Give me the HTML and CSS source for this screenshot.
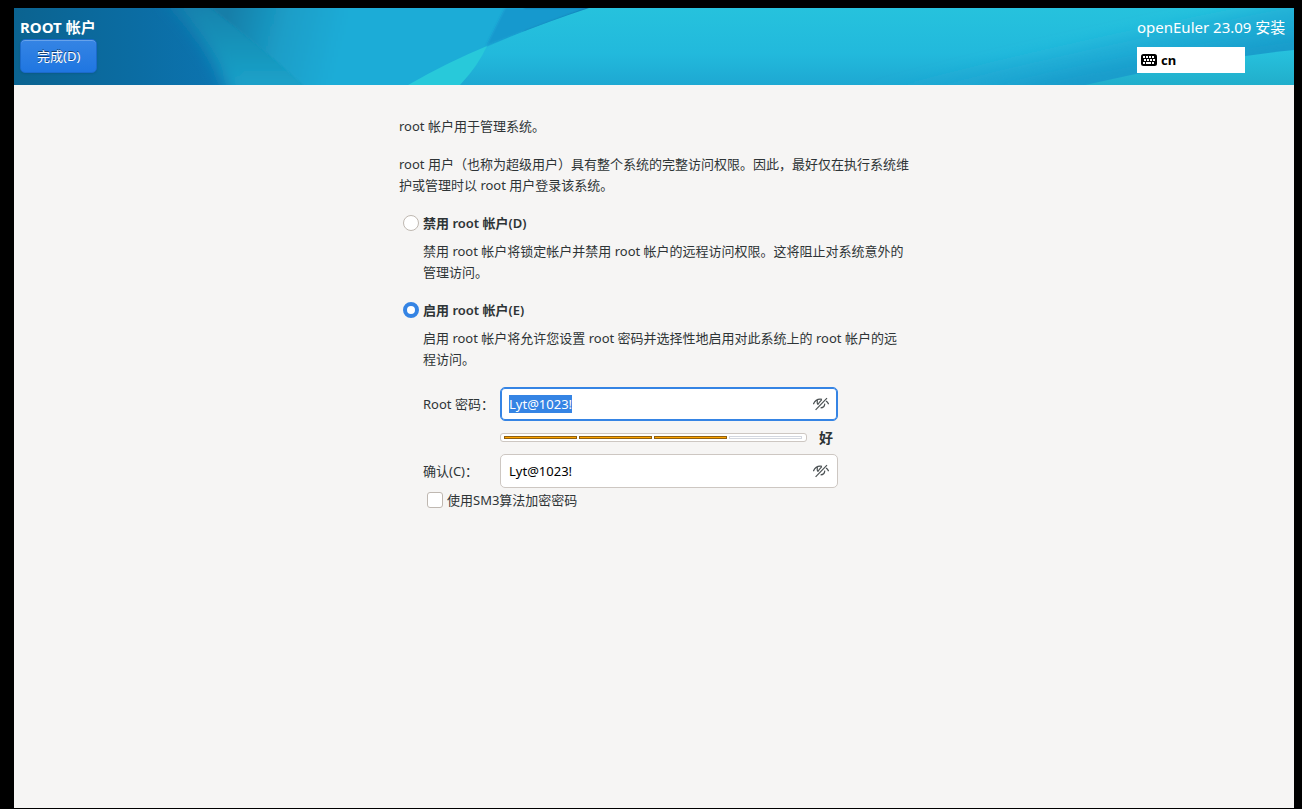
FILE: index.html
```html
<!DOCTYPE html>
<html lang="zh-CN">
<head>
<meta charset="utf-8">
<title>openEuler 23.09 安装</title>
<link rel="stylesheet" href="styles.css">
</head>
<body>
<div class="window">
  <header class="banner">
    <svg class="banner-art" viewBox="0 0 1280 77" preserveAspectRatio="none" aria-hidden="true">
      <defs>
        <linearGradient id="base" x1="0" x2="1" y1="0" y2="0">
          <stop offset="0" stop-color="#0b6390"/>
          <stop offset=".1" stop-color="#0b6da4"/>
          <stop offset=".16" stop-color="#0c74b0"/>
          <stop offset=".25" stop-color="#0d78b0"/>
          <stop offset="1" stop-color="#0d78b0"/>
        </linearGradient>
        <linearGradient id="ray" x1="0" x2="0" y1="0" y2="1">
          <stop offset="0" stop-color="#147fab"/>
          <stop offset=".5" stop-color="#1894bb"/>
          <stop offset="1" stop-color="#1ba6ce"/>
        </linearGradient>
        <linearGradient id="shade" gradientUnits="userSpaceOnUse" x1="215" y1="0" x2="330" y2="30">
          <stop offset="0" stop-color="#157ea8"/>
          <stop offset=".5" stop-color="#1b9ec8"/>
          <stop offset="1" stop-color="#1eacd7"/>
        </linearGradient>
        <linearGradient id="sea" x1="0" x2="0" y1="0" y2="1">
          <stop offset="0" stop-color="#26c2dd"/>
          <stop offset=".6" stop-color="#22b9dc"/>
          <stop offset="1" stop-color="#1ea8d2"/>
        </linearGradient>
        <linearGradient id="deep" gradientUnits="userSpaceOnUse" x1="860" y1="0" x2="900" y2="160">
          <stop offset="0" stop-color="#1eacd8" stop-opacity="0"/>
          <stop offset=".5" stop-color="#1da8d4" stop-opacity=".5"/>
          <stop offset="1" stop-color="#1a9dcb"/>
        </linearGradient>
        <linearGradient id="shore" x1="0" x2="0" y1="0" y2="1">
          <stop offset="0" stop-color="#27c2de"/>
          <stop offset="1" stop-color="#21aecb"/>
        </linearGradient>
        <filter id="soft" x="-10%" y="-30%" width="120%" height="160%"><feGaussianBlur stdDeviation="8"/></filter>
        <filter id="edge" x="-10%" y="-10%" width="120%" height="120%"><feGaussianBlur stdDeviation="1"/></filter>
      </defs>
      <rect width="1280" height="77" fill="url(#base)"/>
      <path d="M150-10Q190 24 218 90H400V-10Z" fill="url(#ray)" filter="url(#soft)"/>
      <path d="M184-10H510V90H304Q245 36 184-10Z" fill="url(#shade)" filter="url(#edge)"/>
      <path d="M491 0H573L472 38Z" fill="#1899ce" filter="url(#edge)"/>
      <path d="M394 77Q472 34 575 0H1280V77Z" fill="url(#sea)"/>
      <path d="M394 77Q434 54 473 38Q464 58 446 77Z" fill="#28c9da"/>
      <path d="M860 90Q1040 40 1300-10V90Z" fill="url(#deep)" filter="url(#soft)"/>
      <path d="M960 90Q1080 52 1300 26V50Q1140 60 1060 90Z" fill="#178fc2" opacity=".4" filter="url(#soft)"/>
      <path d="M1071 77Q1170 54 1280 42V77Z" fill="url(#shore)"/>
    </svg>
    <div class="banner-side">
      <h1 class="title">ROOT 帐户</h1>
      <button class="done" type="button">完成(D)</button>
    </div>
    <div class="banner-side banner-end">
      <p class="product">openEuler 23.09 安装</p>
      <button class="layout" type="button">
        <svg width="16" height="12" viewBox="0 0 16 12" aria-hidden="true">
          <rect width="16" height="12" rx="2.5" fill="#000"/>
          <path d="M2 2h2v2H2zM5 2h2v2H5zM8 2h2v2H8zM11 2h2v2h-2zM3 5h2v2H3zM6 5h2v2H6zM9 5h2v2H9zM12 5h2v2h-2zM2 8h2v2H2zM5 8h5v2H5zM11 8h2v2h-2z" fill="#fff"/>
        </svg>
        <span>cn</span>
      </button>
    </div>
  </header>

  <main class="content">
    <p>root 帐户用于管理系统。</p>
    <p>root 用户（也称为超级用户）具有整个系统的完整访问权限。因此，最好仅在执行系统维护或管理时以 root 用户登录该系统。</p>

    <section class="option">
      <label class="choice"><input class="radio" type="radio" name="root"><span>禁用 root 帐户(D)</span></label>
      <p class="detail">禁用 root 帐户将锁定帐户并禁用 root 帐户的远程访问权限。这将阻止对系统意外的管理访问。</p>
    </section>

    <section class="option">
      <label class="choice"><input class="radio" type="radio" name="root" checked><span>启用 root 帐户(E)</span></label>
      <p class="detail">启用 root 帐户将允许您设置 root 密码并选择性地启用对此系统上的 root 帐户的远程访问。</p>
    </section>

    <form class="form">
      <label for="password">Root 密码：</label>
      <div class="field">
        <input class="entry" id="password" type="text" value="Lyt@1023!" autocomplete="off" spellcheck="false">
        <button class="reveal" type="button" aria-label="隐藏密码">
          <svg width="16" height="16" viewBox="0 0 16 16" aria-hidden="true"><g fill="none" stroke="#4b5153" stroke-width="1.2"><path d="M.4 8.200C2 4.500 5.500 2.700 9 3.400M13 5Q14.800 6.200 15.600 8.200M4.600 4.200Q3.600 7 5 8.600M5 8.600Q6 6.500 8.800 3.600M2.600 13.800L14 2.200M7.600 11.800Q11.600 11.600 11.800 7.600"/></g></svg>
        </button>
      </div>
      <div class="strength">
        <div class="meter" role="meter" aria-label="密码强度" aria-valuemin="0" aria-valuemax="4" aria-valuenow="3">
          <span class="block filled"></span><span class="block filled"></span><span class="block filled"></span><span class="block"></span>
        </div>
        <strong class="grade">好</strong>
      </div>
      <label for="confirm">确认(C)：</label>
      <div class="field">
        <input class="entry" id="confirm" type="text" value="Lyt@1023!" autocomplete="off" spellcheck="false">
        <button class="reveal" type="button" aria-label="隐藏密码">
          <svg width="16" height="16" viewBox="0 0 16 16" aria-hidden="true"><g fill="none" stroke="#4b5153" stroke-width="1.2"><path d="M.4 8.200C2 4.500 5.500 2.700 9 3.400M13 5Q14.800 6.200 15.600 8.200M4.600 4.200Q3.600 7 5 8.600M5 8.600Q6 6.500 8.800 3.600M2.600 13.800L14 2.200M7.600 11.800Q11.600 11.600 11.800 7.600"/></g></svg>
        </button>
      </div>
      <label class="check"><input class="checkbox" type="checkbox"><span>使用SM3算法加密密码</span></label>
    </form>
  </main>
</div>
<script src="script.js"></script>
</body>
</html>
```
FILE: styles.css
```css
* { box-sizing: border-box; }

body {
  margin: 0;
  padding: 8px 8px 1px 14px;
  min-height: 100vh;
  display: flex;
  background: #000;
  color: #2e3436;
  font: 13px/21px "Noto Sans", "Noto Sans CJK SC", sans-serif;
}

h1, p { margin: 0; }
button, input { font: inherit; color: inherit; margin: 0; }

.window {
  flex: 1;
  min-width: 0;
  display: flex;
  flex-direction: column;
  background: #f6f5f4;
}

.banner {
  position: relative;
  display: flex;
  justify-content: space-between;
  padding: 8px 6px 12px;
  color: #fff;
}
.banner-art {
  position: absolute;
  inset: 0;
  width: 100%;
  height: 100%;
}
.banner-side {
  position: relative;
  display: flex;
  flex-direction: column;
  align-items: flex-start;
}
.banner-end { min-width: 151px; }
.title { font-size: 15px; line-height: 23px; font-weight: 700; }
.done {
  height: 34px;
  padding: 0 16px;
  border: 1px solid #1b6acb;
  border-radius: 5px;
  background: linear-gradient(#3584e4, #1f76e1);
  box-shadow: inset 0 1px rgba(255, 255, 255, .25), 0 1px 2px rgba(0, 0, 0, .1);
  color: #fff;
  text-shadow: 0 -1px rgba(0, 0, 0, .5);
}
.product { font-size: 15px; line-height: 23px; }
.layout {
  display: flex;
  align-items: center;
  gap: 4px;
  width: 108px;
  height: 26px;
  margin-top: 8px;
  padding: 0 4px;
  border: 0;
  background: #fff;
  color: #000;
  font-weight: 700;
}

.content {
  display: flex;
  flex-direction: column;
  gap: 17px;
  width: 100%;
  max-width: 510px;
  margin: 0 auto;
  padding: 31px 0;
}

.option { display: grid; gap: 7px; }
.choice {
  display: flex;
  align-items: center;
  gap: 4px;
  padding-left: 4px;
  font-weight: 600;
}
.detail { padding: 0 4px 0 24px; }

.radio, .checkbox {
  appearance: none;
  flex: none;
  width: 16px;
  height: 16px;
  margin-bottom: 2px;
  border: 1px solid #bfb8b1;
  border-radius: 3px;
  background: #fff;
}
.radio { border-radius: 50%; }
.radio:checked { border: 4px solid #3584e4; }

.form {
  display: grid;
  grid-template-columns: 77px minmax(0, 338px);
  align-items: center;
  padding-left: 24px;
}
.field { position: relative; display: flex; }
.entry {
  width: 100%;
  height: 34px;
  padding: 0 32px 0 8px;
  border: 1px solid #cdc7c2;
  border-radius: 5px;
  outline: 0;
  background: #fff;
  color: #000;
}
.entry:focus {
  border-color: #3584e4;
  box-shadow: inset 0 0 0 1px #3584e4;
}
.entry::selection { background: #3584e4; color: #fff; }
.reveal {
  position: absolute;
  top: 9px;
  right: 9px;
  width: 16px;
  height: 16px;
  padding: 0;
  border: 0;
  background: none;
}
.reveal svg { display: block; }

.strength {
  grid-column: 2;
  display: flex;
  align-items: center;
  gap: 12px;
  height: 33px;
  padding-right: 5px;
}
.meter {
  flex: 1;
  display: flex;
  gap: 2px;
  padding: 2px 4px 2px 3px;
  border: 1px solid #cdc7c2;
  border-radius: 3px;
  background: #fff;
}
.block { flex: 1; height: 3px; border: 1px solid #d3d7df; }
.filled { border-color: #8f5f10; background: #ffa500; }
.grade { font-size: 14px; font-weight: 700; }

.check {
  grid-column: 1 / -1;
  display: flex;
  align-items: center;
  gap: 4px;
  margin-top: 2px;
  padding-left: 4px;
}
```
FILE: script.js
```js
const password = document.getElementById("password");
password.focus();
password.select();
```
